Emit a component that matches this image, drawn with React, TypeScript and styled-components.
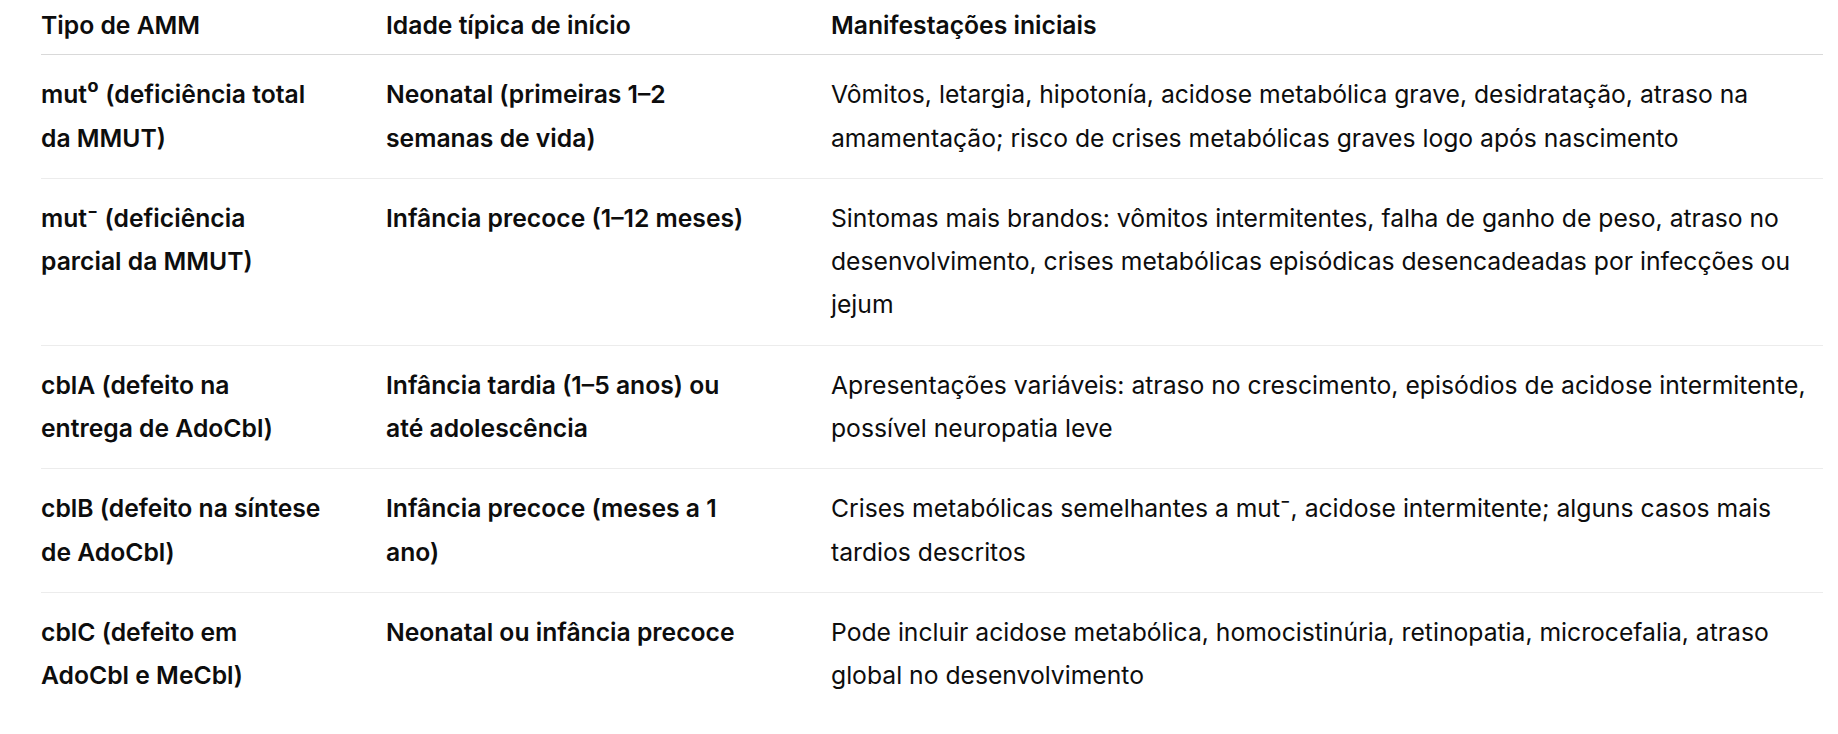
import { Fragment } from "react";
import styled, { createGlobalStyle } from "styled-components";

const GlobalStyle = createGlobalStyle`
  html, body {
    margin: 0;
    padding: 0;
    background: #ffffff;
  }
  body {
    font-family: Inter, "Noto Sans", "Liberation Sans", sans-serif;
    color: #0d0d0d;
    -webkit-font-smoothing: antialiased;
  }
`;

const Page = styled.div`
  padding: 0 15px 0 41px;
`;

const Table = styled.table`
  width: 1782px;
  border-collapse: collapse;
  table-layout: fixed;
  font-size: 24.7px;
  line-height: 43.3px;
`;

const HeadCell = styled.th`
  text-align: left;
  font-weight: 600;
  padding: 4px 40px 7px 0;
  border-bottom: 1px solid #d9d9d9;
  vertical-align: top;
  &:last-child {
    padding-right: 0;
  }
`;

const Row = styled.tr`
  border-bottom: 1px solid #ececec;
  &:last-child {
    border-bottom: none;
  }
`;

const Cell = styled.td<{ $strong?: boolean }>`
  padding: 18px 40px 18px 0;
  vertical-align: top;
  font-weight: ${(p) => (p.$strong ? 600 : 400)};
  &:last-child {
    padding-right: 0;
  }
`;

// each cell keeps the line breaks of the original layout
type Entry = {
  type: string[];
  age: string[];
  signs: string[];
};

const entries: Entry[] = [
  {
    type: ["mut⁰ (deficiência total", "da MMUT)"],
    age: ["Neonatal (primeiras 1–2", "semanas de vida)"],
    signs: [
      "Vômitos, letargia, hipotonía, acidose metabólica grave, desidratação, atraso na",
      "amamentação; risco de crises metabólicas graves logo após nascimento",
    ],
  },
  {
    type: ["mut⁻ (deficiência", "parcial da MMUT)"],
    age: ["Infância precoce (1–12 meses)"],
    signs: [
      "Sintomas mais brandos: vômitos intermitentes, falha de ganho de peso, atraso no",
      "desenvolvimento, crises metabólicas episódicas desencadeadas por infecções ou",
      "jejum",
    ],
  },
  {
    type: ["cblA (defeito na", "entrega de AdoCbl)"],
    age: ["Infância tardia (1–5 anos) ou", "até adolescência"],
    signs: [
      "Apresentações variáveis: atraso no crescimento, episódios de acidose intermitente,",
      "possível neuropatia leve",
    ],
  },
  {
    type: ["cblB (defeito na síntese", "de AdoCbl)"],
    age: ["Infância precoce (meses a 1", "ano)"],
    signs: [
      "Crises metabólicas semelhantes a mut⁻, acidose intermitente; alguns casos mais",
      "tardios descritos",
    ],
  },
  {
    type: ["cblC (defeito em", "AdoCbl e MeCbl)"],
    age: ["Neonatal ou infância precoce"],
    signs: [
      "Pode incluir acidose metabólica, homocistinúria, retinopatia, microcefalia, atraso",
      "global no desenvolvimento",
    ],
  },
];

const Lines = ({ lines }: { lines: string[] }) => (
  <>
    {lines.map((line, i) => (
      <Fragment key={line}>
        {i > 0 && <br />}
        {line}
      </Fragment>
    ))}
  </>
);

export default function App() {
  return (
    <>
      <GlobalStyle />
      <Page>
        <Table>
          <colgroup>
            <col style={{ width: 345 }} />
            <col style={{ width: 445 }} />
            <col />
          </colgroup>
          <thead>
            <tr>
              <HeadCell>Tipo de AMM</HeadCell>
              <HeadCell>Idade típica de início</HeadCell>
              <HeadCell>Manifestações iniciais</HeadCell>
            </tr>
          </thead>
          <tbody>
            {entries.map((e) => (
              <Row key={e.type[0]}>
                <Cell $strong>
                  <Lines lines={e.type} />
                </Cell>
                <Cell $strong>
                  <Lines lines={e.age} />
                </Cell>
                <Cell>
                  <Lines lines={e.signs} />
                </Cell>
              </Row>
            ))}
          </tbody>
        </Table>
      </Page>
    </>
  );
}
